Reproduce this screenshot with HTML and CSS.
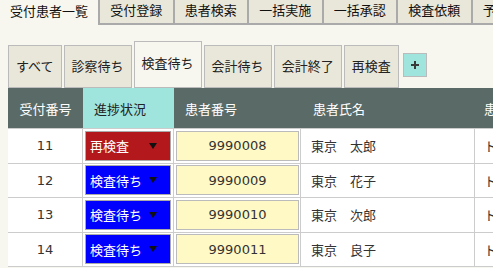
FILE: index.html
```html
<!DOCTYPE html>
<html lang="ja">
<head>
<meta charset="utf-8">
<title>受付患者一覧</title>
<link rel="stylesheet" href="styles.css">
</head>
<body>
<nav class="topnav">
  <span class="ttab active">受付患者一覧</span>
  <span class="ttab">受付登録</span>
  <span class="ttab">患者検索</span>
  <span class="ttab">一括実施</span>
  <span class="ttab">一括承認</span>
  <span class="ttab">検査依頼</span>
  <span class="ttab">予約一覧</span>
</nav>
<main class="content">
  <div class="subtabs">
    <span class="stab">すべて</span>
    <span class="stab">診察待ち</span>
    <span class="stab active">検査待ち</span>
    <span class="stab">会計待ち</span>
    <span class="stab">会計終了</span>
    <span class="stab">再検査</span>
    <button class="add" type="button"><svg width="10" height="10" viewBox="0 0 10 10"><path d="M5 1v8M1 5h8" stroke="#3a3a3a" stroke-width="2"/></svg></button>
  </div>
  <div class="grid">
    <div class="row head">
      <div class="c c1">受付番号</div>
      <div class="c c2 status">進捗状況</div>
      <div class="c c3">患者番号</div>
      <div class="c c4">患者氏名</div>
      <div class="c c5">患者カナ</div>
    </div>
    <div class="row body">
      <div class="c c1">11</div>
      <div class="c c2"><div class="sel red"><span>再検査</span><svg width="8" height="6" viewBox="0 0 8 6"><path d="M0 0h8L4 6z" fill="#111"/></svg></div></div>
      <div class="c c3"><input class="pid" type="text" value="9990008" readonly></div>
      <div class="c c4">東京　太郎</div>
      <div class="c c5">トウキョウ　タロウ</div>
    </div>
    <div class="row body">
      <div class="c c1">12</div>
      <div class="c c2"><div class="sel blue"><span>検査待ち</span><svg width="8" height="6" viewBox="0 0 8 6"><path d="M0 0h8L4 6z" fill="#111"/></svg></div></div>
      <div class="c c3"><input class="pid" type="text" value="9990009" readonly></div>
      <div class="c c4">東京　花子</div>
      <div class="c c5">トウキョウ　ハナコ</div>
    </div>
    <div class="row body">
      <div class="c c1">13</div>
      <div class="c c2"><div class="sel blue"><span>検査待ち</span><svg width="8" height="6" viewBox="0 0 8 6"><path d="M0 0h8L4 6z" fill="#111"/></svg></div></div>
      <div class="c c3"><input class="pid" type="text" value="9990010" readonly></div>
      <div class="c c4">東京　次郎</div>
      <div class="c c5">トウキョウ　ジロウ</div>
    </div>
    <div class="row body">
      <div class="c c1">14</div>
      <div class="c c2"><div class="sel blue"><span>検査待ち</span><svg width="8" height="6" viewBox="0 0 8 6"><path d="M0 0h8L4 6z" fill="#111"/></svg></div></div>
      <div class="c c3"><input class="pid" type="text" value="9990011" readonly></div>
      <div class="c c4">東京　良子</div>
      <div class="c c5">トウキョウ　ヨシコ</div>
    </div>
  </div>
</main>
</body>
</html>
```

FILE: styles.css
```css
html, body {
  margin: 0;
  background: #f8f7ef;
}
body {
  font-family: "DejaVu Sans", "Noto Sans CJK JP", sans-serif;
  font-size: 13px;
  color: #222;
  width: 493px;
  height: 268px;
  overflow: hidden;
}

.topnav {
  display: flex;
  height: 25px;
  white-space: nowrap;
}
.ttab {
  flex: none;
  box-sizing: border-box;
  height: 25px;
  padding: 0 10.25px;
  line-height: 22px;
  border-left: 2px solid #aaa;
  border-bottom: 2px solid #aaa;
  background: #e9e7d9;
  color: #111;
}
.ttab.active {
  border: none;
  background: transparent;
  padding: 0 10px;
  line-height: 23px;
}

.content {
  padding: 16px 0 0 8px;
}

.subtabs {
  display: flex;
  align-items: flex-end;
  height: 47px;
  white-space: nowrap;
}
.stab {
  flex: none;
  box-sizing: border-box;
  height: 43px;
  padding: 0 7px;
  margin-right: 2px;
  line-height: 41px;
  border: 1px solid #bbb;
  background: #e9e7d9;
  color: #222;
}
.stab.active {
  height: 47px;
  line-height: 43px;
  background: #f8f7ef;
}
.add {
  box-sizing: border-box;
  width: 24px;
  height: 24px;
  margin: 0 0 11px 2px;
  padding: 0;
  border: 1px solid #bbb;
  background: #a0e4de;
  display: flex;
  align-items: center;
  justify-content: center;
}

.row {
  display: grid;
  grid-template-columns: 75px 91px 127px 174px 220px;
  width: 687px;
}
.c {
  box-sizing: border-box;
  display: flex;
  align-items: center;
  white-space: nowrap;
  overflow: hidden;
}
.head {
  height: 41px;
  background: #5a6b67;
  color: #fff;
}
.head .c {
  border-bottom: 1px solid #ccc;
}
.head .status {
  background: #a0e4de;
  color: #222;
}
.head .c1 { justify-content: center; }
.head .c2 { padding-left: 11px; }
.head .c3 { padding-left: 11px; }
.head .c4 { padding-left: 12px; }
.head .c5 { padding-left: 9px; }

.body {
  height: 34.5px;
  background: #fff;
  color: #333;
}
.body .c {
  border-right: 1px solid #ccc;
  border-bottom: 1px solid #ccc;
}
.body .c1 { justify-content: center; }
.body .c2, .body .c3 { padding-left: 2px; }
.body .c4 { padding-left: 10px; }
.body .c5 { padding-left: 9px; }

.sel {
  box-sizing: border-box;
  width: 86px;
  height: 30px;
  border: 1px solid #aaa;
  color: #fff;
  display: flex;
  align-items: center;
  justify-content: space-between;
  padding: 0 13px 0 4px;
}
.sel.red { background: #b3191c; }
.sel.blue { background: #0000ff; }

.pid {
  box-sizing: border-box;
  width: 123px;
  height: 30px;
  margin: 0;
  padding: 0;
  border: 1px solid #bbb;
  background: #fff9c5;
  color: #333;
  font-family: inherit;
  font-size: 13px;
  text-align: center;
  outline: none;
}
```
